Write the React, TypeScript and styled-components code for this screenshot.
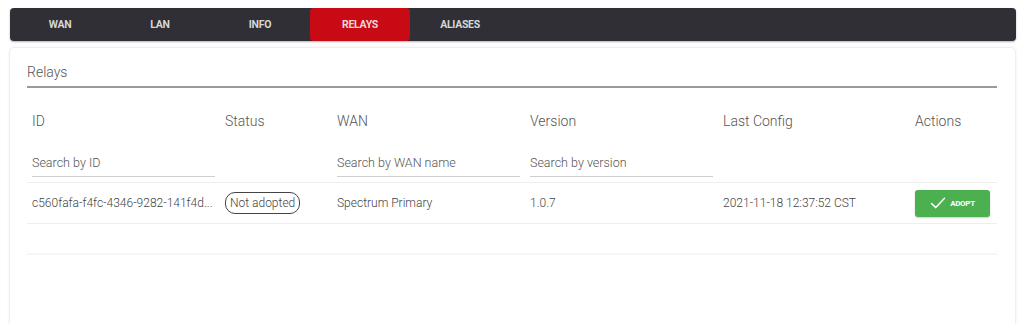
import styled, { createGlobalStyle } from 'styled-components'

const GlobalStyle = createGlobalStyle`
  html, body {
    margin: 0;
    padding: 0;
    background: #ffffff;
    font-family: Roboto, 'Liberation Sans', sans-serif;
  }
  * {
    box-sizing: border-box;
  }
`

const tabs = ['WAN', 'LAN', 'INFO', 'RELAYS', 'ALIASES']
const activeTab = 'RELAYS'

const columns = '193px 112px 193px 193px 192px 1fr'

const relays = [
  {
    id: 'c560fafa-f4fc-4346-9282-141f4d2b0e5a',
    status: 'Not adopted',
    wan: 'Spectrum Primary',
    version: '1.0.7',
    lastConfig: '2021-11-18 12:37:52 CST',
  },
]

// long ids are cut to fit the column
const shortId = (id: string) => (id.length > 30 ? id.slice(0, 30) + '...' : id)

const CheckIcon = () => (
  <svg width='16' height='14' viewBox='0 0 16 14' fill='none'>
    <path d='M1.5 7.5 L5.8 11.6 L14.5 2.2' stroke='#fff' strokeWidth='1.5' strokeLinecap='round' strokeLinejoin='round' />
  </svg>
)

const App = () => {
  return (
    <StyledPage>
      <GlobalStyle />
      <TabBar>
        {tabs.map((t) => (
          <Tab key={t} $active={t === activeTab}>
            {t}
          </Tab>
        ))}
      </TabBar>
      <Card>
        <CardTitle>Relays</CardTitle>
        <Table>
          <HeadRow>
            <HeadCell>ID</HeadCell>
            <HeadCell>Status</HeadCell>
            <HeadCell>WAN</HeadCell>
            <HeadCell>Version</HeadCell>
            <HeadCell>Last Config</HeadCell>
            <HeadCell>Actions</HeadCell>
          </HeadRow>
          <FilterRow>
            <FilterCell>
              <SearchInput placeholder='Search by ID' />
            </FilterCell>
            <FilterCell />
            <FilterCell>
              <SearchInput placeholder='Search by WAN name' />
            </FilterCell>
            <FilterCell>
              <SearchInput placeholder='Search by version' />
            </FilterCell>
            <FilterCell />
            <FilterCell />
          </FilterRow>
          {relays.map((r) => (
            <DataRow key={r.id}>
              <Cell title={r.id}>{shortId(r.id)}</Cell>
              <Cell>
                <StatusChip>{r.status}</StatusChip>
              </Cell>
              <Cell>{r.wan}</Cell>
              <Cell>{r.version}</Cell>
              <Cell>{r.lastConfig}</Cell>
              <Cell>
                <AdoptButton>
                  <CheckIcon />
                  <span>ADOPT</span>
                </AdoptButton>
              </Cell>
            </DataRow>
          ))}
          <EmptyRow />
        </Table>
      </Card>
    </StyledPage>
  )
}

const StyledPage = styled.div`
  padding: 8px 8px 0 9px;
  height: 324px;
  overflow: hidden;
`

const TabBar = styled.div`
  display: flex;
  height: 33px;
  margin-left: 1px;
  background: #2f2f35;
  border-radius: 4px;
  box-shadow: 0 1px 2px rgba(0, 0, 0, 0.3);
`

const Tab = styled.div<{ $active?: boolean }>`
  width: 100px;
  display: flex;
  align-items: center;
  justify-content: center;
  font-size: 10.5px;
  font-weight: 700;
  letter-spacing: -0.3px;
  color: ${(p) => (p.$active ? '#f1d6d6' : '#d6d6d6')};
  background: ${(p) => (p.$active ? '#c80a14' : 'transparent')};
  border-radius: 4px;
`

const Card = styled.div`
  margin-top: 6px;
  height: 300px;
  background: #fff;
  border: 1px solid #efefef;
  border-radius: 5px;
  box-shadow: 0 0 3px rgba(0, 0, 0, 0.06);
  padding: 16px 18px 0 17px;
`

const CardTitle = styled.div`
  font-size: 14px;
  font-weight: 300;
  color: #555;
  height: 24px;
  line-height: 17px;
  border-bottom: 2px solid #9a9a9a;
`

const Table = styled.div`
  margin-top: 18px;
  color: #6a6a6a;
`

const Row = styled.div`
  display: grid;
  grid-template-columns: ${columns};
  align-items: center;
`

const HeadRow = styled(Row)`
  height: 30px;
`

const HeadCell = styled.div`
  padding-left: 5px;
  font-size: 14px;
  font-weight: 300;
  color: #555;
`

const FilterRow = styled(Row)`
  height: 47px;
  border-bottom: 1px solid #eeeeee;
  align-items: start;
  padding-top: 16px;
`

const FilterCell = styled.div`
  padding: 0 5px;
`

const SearchInput = styled.input`
  width: 100%;
  border: none;
  border-bottom: 1px solid #cfcfcf;
  outline: none;
  font-family: Roboto, 'Liberation Sans', sans-serif;
  font-size: 12.5px;
  font-weight: 300;
  padding: 3px 0 6px 0;
  background: transparent;
  color: #555;
  &::placeholder {
    color: #555;
  }
`

const DataRow = styled(Row)`
  height: 41px;
  border-bottom: 1px solid #eeeeee;
  font-size: 12px;
  font-weight: 300;
`

const Cell = styled.div`
  padding-left: 5px;
  min-width: 0;
  white-space: nowrap;
  color: #444;
`

const StatusChip = styled.span`
  display: inline-block;
  border: 1px solid #444;
  border-radius: 10px;
  padding: 3px 4px;
  font-size: 12px;
  color: #444;
  line-height: 14px;
`

const AdoptButton = styled.button`
  display: inline-flex;
  align-items: center;
  justify-content: center;
  gap: 4px;
  width: 75px;
  height: 27px;
  border: none;
  border-radius: 3px;
  background: #4caf50;
  color: #fff;
  font-family: Roboto, 'Liberation Sans', sans-serif;
  font-size: 8px;
  font-weight: 700;
  letter-spacing: -0.3px;
  box-shadow: 0 1px 2px rgba(0, 0, 0, 0.2);
  padding: 0;
`

const EmptyRow = styled.div`
  height: 31px;
  border-bottom: 2px solid #f5f5f5;
`

export default App
